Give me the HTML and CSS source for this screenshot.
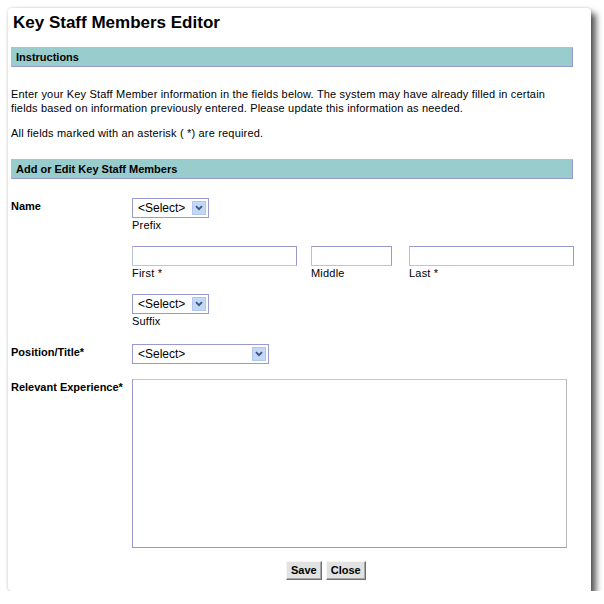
FILE: index.html
```html
<!DOCTYPE html>
<html>
<head>
<meta charset="utf-8">
<title>Key Staff Members Editor</title>
<link rel="stylesheet" href="styles.css">
</head>
<body>
<div class="window">
  <h1 class="title">Key Staff Members Editor</h1>
  <div class="bar">Instructions</div>
  <p class="intro">Enter your Key Staff Member information in the fields below. The system may have already filled in certain fields based on information previously entered. Please update this information as needed.</p>
  <p class="intro last">All fields marked with an asterisk ( *) are required.</p>
  <div class="bar">Add or Edit Key Staff Members</div>
  <form class="form">
    <div class="label">Name</div>
    <div class="name-fields">
      <div class="group">
        <div class="select-wrap small">
          <select class="select"><option>&lt;Select&gt;</option></select>
          <span class="arrow"><svg width="8" height="6" viewBox="0 0 8 6"><path d="M1 1.2 L4 4.2 L7 1.2" fill="none" stroke="#3c5580" stroke-width="1.8"/></svg></span>
        </div>
        <div class="caption">Prefix</div>
      </div>
      <div class="group inputs">
        <div class="field first">
          <input class="text" type="text">
          <div class="caption">First *</div>
        </div>
        <div class="field middle">
          <input class="text" type="text">
          <div class="caption">Middle</div>
        </div>
        <div class="field lastname">
          <input class="text" type="text">
          <div class="caption">Last *</div>
        </div>
      </div>
      <div class="group">
        <div class="select-wrap small">
          <select class="select"><option>&lt;Select&gt;</option></select>
          <span class="arrow"><svg width="8" height="6" viewBox="0 0 8 6"><path d="M1 1.2 L4 4.2 L7 1.2" fill="none" stroke="#3c5580" stroke-width="1.8"/></svg></span>
        </div>
        <div class="caption">Suffix</div>
      </div>
    </div>
    <div class="label">Position/Title*</div>
    <div>
      <div class="select-wrap wide">
        <select class="select"><option>&lt;Select&gt;</option></select>
        <span class="arrow"><svg width="8" height="6" viewBox="0 0 8 6"><path d="M1 1.2 L4 4.2 L7 1.2" fill="none" stroke="#3c5580" stroke-width="1.8"/></svg></span>
      </div>
    </div>
    <div class="label">Relevant Experience*</div>
    <div>
      <textarea class="area"></textarea>
    </div>
  </form>
  <div class="buttons">
    <button class="btn" type="button">Save</button>
    <button class="btn" type="button">Close</button>
  </div>
</div>
</body>
</html>
```

FILE: styles.css
```css
html, body {
  margin: 0;
  padding: 0;
  background: #ffffff;
}

body {
  font-family: "Liberation Sans", Arial, sans-serif;
  font-size: 11px;
  color: #000;
}

.window {
  box-sizing: border-box;
  margin: 8px 0 0 8px;
  width: 583px;
  height: 583px;
  padding: 5px 18px 0 3px;
  background: #fff;
  border-radius: 4px 4px 0 4px;
  box-shadow: 0 0 3px rgba(0, 0, 0, 0.2), 5px 5px 6px rgba(0, 0, 0, 0.65);
}

.title {
  margin: 0 0 14px 2px;
  font-size: 17px;
  line-height: 20px;
  font-weight: bold;
}

.bar {
  background: #99cccc;
  border: 1px solid #9999cc;
  border-top-color: #b9b9e0;
  border-left-color: #b9b9e0;
  padding: 2px 4px;
  line-height: 14px;
  font-weight: bold;
  font-size: 11px;
}

.intro {
  margin: 20px 0 0 0;
  line-height: 14px;
  letter-spacing: 0.18px;
}

.intro.last {
  margin: 11px 0 19px 0;
}

.form {
  margin-top: 19px;
  display: grid;
  grid-template-columns: 121px 1fr;
  row-gap: 15.5px;
}

.label {
  font-weight: bold;
  line-height: 14px;
  padding-top: 1px;
}

.name-fields {
  display: flex;
  flex-direction: column;
  gap: 14px;
}

.inputs {
  display: flex;
}

.field.first { width: 165px; margin-right: 14px; }
.field.middle { width: 81px; margin-right: 17px; }
.field.lastname { width: 165px; }

.caption {
  line-height: 14px;
  letter-spacing: 0.2px;
}

.select-wrap {
  position: relative;
  height: 20px;
}

.select-wrap.small { width: 77px; }
.select-wrap.wide { width: 137px; }

.select {
  -webkit-appearance: none;
  appearance: none;
  box-sizing: border-box;
  width: 100%;
  height: 20px;
  margin: 0;
  padding: 0 0 0 5px;
  border: 1px solid #9a9ad2;
  border-radius: 0;
  background: #fff;
  font-family: "Liberation Sans", Arial, sans-serif;
  font-size: 12px;
  color: #000;
  line-height: 18px;
}

.arrow {
  position: absolute;
  right: 3px;
  top: 3px;
  width: 14px;
  height: 14px;
  box-sizing: border-box;
  background: #c3d8f7;
  border: 1px solid #b1c8ee;
  display: flex;
  align-items: center;
  justify-content: center;
  pointer-events: none;
}

.text {
  display: block;
  box-sizing: border-box;
  width: 100%;
  height: 20px;
  margin: 0;
  padding: 0 2px;
  border: 1px solid;
  border-color: #9999cc #9999cc #c4c4c4 #b4c6d8;
  background: #fff;
  font-family: "Liberation Sans", Arial, sans-serif;
  font-size: 12px;
}

.area {
  display: block;
  box-sizing: border-box;
  width: 435px;
  height: 169px;
  margin: 0;
  padding: 2px;
  border: 1px solid;
  border-color: #a8d0d0 #b8b8b8 #9999cc #9999cc;
  resize: none;
  font-family: "Liberation Sans", Arial, sans-serif;
  font-size: 12px;
}

.buttons {
  display: flex;
  gap: 4px;
  margin-top: 13px;
  padding-left: 275px;
}

.btn {
  box-sizing: border-box;
  height: 19px;
  margin: 0;
  padding: 0 4px;
  border: 1px solid;
  border-color: #f6f6f6 #6f6f6f #6f6f6f #f6f6f6;
  box-shadow: inset -1px -1px 0 #a8a8a8;
  background: #e2e2e2;
  font-family: "Liberation Sans", Arial, sans-serif;
  font-size: 11px;
  font-weight: bold;
  color: #000;
  line-height: 15px;
}
```
